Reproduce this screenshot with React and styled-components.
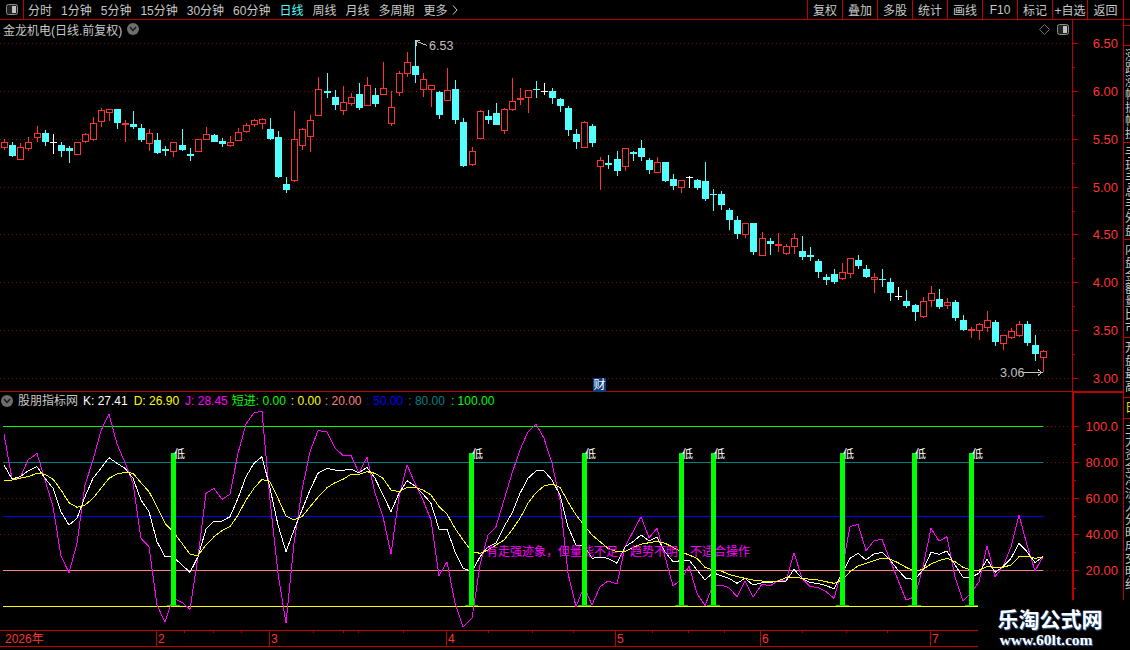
import React from "react";
import styled, { createGlobalStyle } from "styled-components";

const RED_LINE = "#c00000";
const RED_TEXT = "#ff3333";
const CYAN = "#54ffff";
const GRID = "#7c1010";
const FONT = `"Liberation Sans", "Noto Sans CJK SC", sans-serif`;

const Global = createGlobalStyle`
  html, body { margin:0; padding:0; background:#000; }
  body { font-family:${FONT}; font-size:12px; color:#c8c8c8; }
`;

const Screen = styled.div`
  position:relative;
  width:1130px;
  height:650px;
  background:#000;
  overflow:hidden;
`;

/* toolbar */
const Toolbar = styled.div`
  display:flex;
  align-items:stretch;
  height:19px;
  border-bottom:1px solid ${RED_LINE};
`;
const ToggleBox = styled.div`
  width:23px;
  display:flex;
  align-items:center;
  justify-content:center;
  border-right:1px solid ${RED_LINE};
`;
const Nav = styled.div`
  display:flex;
  align-items:center;
  gap:9px;
  padding-left:4px;
`;
const NavItem = styled.span`
  display:flex;
  align-items:center;
  gap:4px;
  white-space:nowrap;
  color:${p => (p.$active ? CYAN : "#c8c8c8")};
`;
const Actions = styled.div`
  display:flex;
  margin-left:auto;
  margin-right:6px;
  border-right:1px solid ${RED_LINE};
`;
const Action = styled.span`
  width:${p => p.$w || 35}px;
  box-sizing:border-box;
  border-left:1px solid ${RED_LINE};
  display:flex;
  align-items:center;
  justify-content:center;
  white-space:nowrap;
`;

/* body */
const Body = styled.div`
  display:flex;
  height:630px;
`;
const Main = styled.div`
  width:1123px;
  display:flex;
  flex-direction:column;
`;
const Pane = styled.div`
  display:grid;
  grid-template-columns:1072px 51px;
  height:${p => p.$h}px;
  border-bottom:${p => (p.$ruled ? `1px solid ${RED_LINE}` : "none")};
`;
const Stack = styled.div`
  position:relative;
  display:flex;
  flex-direction:column;
  min-width:0;
`;
const TitleRow = styled.div`
  display:flex;
  align-items:center;
  height:18px;
  padding-left:3px;
  gap:5px;
  white-space:nowrap;
`;
const TitleTools = styled.div`
  display:flex;
  align-items:center;
  gap:7px;
  margin-left:auto;
  margin-right:3px;
`;
const Round = styled.span`
  width:12px;
  height:12px;
  border-radius:50%;
  background:#6e6e6e;
  display:flex;
  align-items:center;
  justify-content:center;
  flex:none;
`;
const Plot = styled.svg`
  display:block;
  flex:none;
`;
const Axis = styled.div`
  box-sizing:border-box;
  border-left:${p => p.$weight}px solid ${RED_LINE};
  border-top:${p => (p.$framed ? `1px solid ${RED_LINE}` : "none")};
  overflow:hidden;
`;
const CaiBadge = styled.span`
  position:absolute;
  left:593px;
  bottom:-1px;
  width:13px;
  height:14px;
  line-height:14px;
  text-align:center;
  background:#0b3f7f;
  color:#fff;
`;
const LegendRow = styled.div`
  display:flex;
  align-items:baseline;
  height:18px;
  line-height:18px;
  padding-left:1px;
  white-space:nowrap;
`;
const LegendBall = styled.span`
  align-self:center;
`;
const LegendName = styled.span`
  margin:0 5px 0 5px;
  width:60px;
`;
const LegendValue = styled.span`
  color:${p => p.$color};
  margin-right:${p => p.$gap ?? 6}px;
`;

/* clipped column on the far right */
const Strip = styled.div`
  flex:1;
  border-left:1px solid ${RED_LINE};
  display:flex;
  flex-direction:column;
  overflow:hidden;
`;
const StripCell = styled.div`
  height:${p => p.$h}px;
  flex:none;
  box-sizing:border-box;
  border-bottom:1px solid ${RED_LINE};
  padding:${p => (p.$pad ? "4px 0 0 1px" : "0")};
  width:18px;
  line-height:13px;
  word-break:break-all;
  overflow:hidden;
  color:${p => p.$color || "#c8c8c8"};
`;

const Watermark = styled.div`
  position:absolute;
  right:0;
  bottom:0;
  width:152px;
  height:50px;
  background:#000;
  display:flex;
  flex-direction:column;
  align-items:center;
  padding-right:8px;
  box-sizing:border-box;
`;
const MarkName = styled.div`
  font:700 21px/26px "Noto Sans CJK SC", sans-serif;
  color:#fff;
  margin-top:5px;
  text-shadow:1px 1px 1px #35689c;
`;
const MarkUrl = styled.div`
  font:700 15.5px/16px "Liberation Serif", serif;
  color:#fff;
  margin:1px 8px 0 0;
  text-shadow:1px 1px 1px #35689c;
`;

/* candles read off the chart: [type, wickTop, bodyTop, bodyBottom, wickBottom], 3x crop units */
const SEG_A = [
  ["r",298,307,324,330],["c",307,316,348,351],["r",309,322,360,360],["r",292,307,327,333],["r",259,280,293,305],
  ["c",270,280,306,318],["w",282,307,309,342],["c",307,316,333,351],["c",319,324,333,369],["r",307,307,345,345],
  ["r",280,283,306,309],["r",232,250,300,303],["r",205,211,246,261],["r",208,208,218,243],["c",207,207,249,267],
  ["r",240,250,256,306],["c",213,252,262,267],["c",252,264,300,306],["r",268,280,312,333],["c",279,300,339,342],
  ["c",319,327,333,348],["r",307,307,336,351],["c",267,315,330,333],["c",324,342,348,363],["r",298,298,336,336],
  ["r",261,283,300,300],["c",282,285,306,306],["c",294,303,312,321],["r",288,306,318,321],["r",264,276,303,303],
  ["r",250,256,276,279],["r",237,241,255,261],["r",234,237,252,267],["c",234,267,297,300],["c",273,291,411,414],
  ["c",411,432,450,459],["r",213,297,423,426],["r",264,267,318,330],["r",225,240,291,336],["r",111,148,228,228],
  ["c",99,153,159,174],["c",150,171,195,210],["r",138,186,213,225],["r",159,171,192,198],["c",129,162,204,210],
  ["r",111,135,198,198],["c",144,165,192,201],["r",66,145,165,165],["r",153,201,252,258],["r",93,99,159,168],
];
const SEG_B = [
  ["r",66,97,131,140],["c",30,108,135,159],["r",129,148,179,201],["r",165,166,179,231],["c",183,186,255,267],
  ["r",114,181,213,213],["c",150,177,270,282],["c",264,276,408,410],["r",351,364,405,408],["r",241,243,327,327],
  ["c",240,258,270,282],["c",219,249,285,285],["r",234,238,303,312],["r",144,214,240,243],["r",174,204,210,225],
  ["r",180,181,204,249],["c",153,177,180,204],["w",159,183,186,195],["c",174,183,204,222],["c",204,207,228,246],
  ["c",228,234,300,318],["c",297,312,336,357],["r",273,277,354,354],["c",282,288,339,351],["r",381,391,410,480],
  ["c",375,399,404,417],["c",363,387,423,438],["r",355,355,410,423],["c",363,366,372,393],["c",330,354,381,393],
  ["c",384,390,420,432],["r",381,397,429,429],["c",396,396,453,456],["c",432,447,468,480],["r",451,451,473,489],
  ["w",438,441,444,474],["c",447,450,474,480],["c",396,453,507,513],["c",477,492,495,543],["c",483,492,525,540],
  ["c",534,540,570,600],
];
const SEG_C = [
  ["c",78,90,132,147],["r",99,99,135,144],["c",99,99,186,195],["r",126,145,198,198],["c",144,153,162,195],
  ["r",129,162,168,186],["r",162,168,192,195],["r",129,145,171,192],["c",138,183,201,210],["c",171,195,201,213],
  ["c",207,213,246,264],["c",252,261,270,285],["c",237,252,276,282],["r",219,246,267,270],["r",204,204,252,264],
  ["c",195,210,228,237],["c",225,237,261,264],["r",249,261,270,309],["c",237,267,270,291],["c",264,276,309,333],
  ["w",291,318,321,330],["c",300,333,348,354],["c",342,345,366,393],["r",321,333,381,384],["r",288,309,333,351],
  ["c",297,327,351,357],["r",324,336,348,357],["c",330,336,384,393],["c",375,390,420,423],["r",411,417,423,444],
  ["r",400,402,423,450],["r",363,390,414,426],["c",390,396,456,468],["r",435,435,462,480],["r",414,423,444,447],
  ["r",393,402,438,441],["c",393,402,459,468],["c",435,465,492,513],["r",480,483,504,546],
];
const placeSeg = (seg, base) =>
  seg.map(([t, a, b, c, d]) => [t, ...[a, b, c, d].map(v => Math.round(base + v / 3))]);
const CANDLES = [...placeSeg(SEG_A, 40), ...placeSeg(SEG_B, 30), ...placeSeg(SEG_C, 190)];
const barX = i => Math.round(4.33 + 8.055 * i);

const SERIES_J = [72,207,204,150,130,210,290,438,488,400,225,150,62,12,102,158,220,385,410,585,637,565,577,598,440,250,235,268,253,130,42,8,4,270,490,640,400,240,125,62,65,115,136,136,190,142,250,320,432,260,165,220,270,330,497,455,580,650,625,465,375,350,270,190,120,65,43,85,160,270,490,590,530,585,530,513,522,410,365,320,383,355,440,528,510,468,550,587,525,525,533,560,513,562,522,528,512,513,428,505,530,532,545,565,480,350,343,422,392,388,450,510,570,560,470,355,393,380,500,572,550,515,407,500,470,410,315,405,483,440];
const SERIES_K = [165,207,200,183,170,205,235,305,345,325,260,205,175,143,160,175,205,270,305,395,440,440,465,487,440,358,333,333,320,265,200,160,140,235,345,425,360,300,240,190,175,180,181,178,188,172,205,255,305,250,212,228,252,280,357,358,425,475,485,440,410,400,350,310,250,205,183,182,210,255,350,405,405,445,442,445,460,410,395,375,392,382,425,455,452,450,480,510,488,497,505,520,505,525,518,518,513,513,478,505,518,520,527,536,490,445,430,450,432,427,450,480,506,508,480,427,433,423,465,502,502,490,448,487,470,445,400,425,458,440];
const SERIES_D = [211,210,205,200,190,193,208,240,278,292,285,265,235,205,192,187,190,218,245,290,340,365,400,433,437,405,380,362,350,315,270,235,208,215,265,318,330,320,290,262,233,218,208,193,193,185,190,205,240,245,232,232,240,255,290,312,355,390,425,430,420,405,390,360,325,280,248,228,222,232,275,315,345,375,395,415,425,425,412,403,398,394,400,412,425,435,445,472,480,483,493,500,505,510,513,516,513,503,502,505,508,510,515,520,510,485,468,460,452,444,447,458,472,484,478,462,452,445,455,472,480,480,470,472,472,465,440,438,445,442];
const toPoints = s => s.map((v, i) => `${barX(i)},${(410 + v / 3).toFixed(1)}`).join(" ");

const PRICE_GRID = [43, 91, 139, 187, 234, 282, 330, 378];
const PRICE_LABELS = ["6.50", "6.00", "5.50", "5.00", "4.50", "4.00", "3.50", "3.00"];
const LEVELS = [
  { y: 426, color: "#00ff00", label: "100.0" },
  { y: 462, color: "#008080", label: "80.00" },
  { y: 498, label: "60.00" },
  { y: 534, label: "40.00" },
  { y: 570, color: "#ff8080", label: "20.00" },
];
const SIGNAL_X = [171, 469, 582, 679, 711, 840, 912, 969];
const MONTHS = [[156, "2", 158], [269, "3", 271], [446, "4", 448], [615, "5", 617], [760, "6", 762], [930, "7", 932]];
const MINOR_TICKS = [184, 213, 241, 313, 343, 358, 403, 488, 532, 573, 652, 688, 724, 802, 846, 887];

const PanelIcon = () => (
  <svg width="12" height="11" viewBox="0 0 12 11">
    <rect x="0.5" y="0.5" width="11" height="10" rx="2" fill="#222" stroke="#8a8a8a" />
    <rect x="6" y="2" width="4" height="7" fill="#c0c0c0" />
  </svg>
);
const Diamond = () => (
  <svg width="11" height="11" viewBox="0 0 11 11">
    <path d="M5.5 .5 L10.5 5.5 L5.5 10.5 L.5 5.5 Z" fill="none" stroke="#707070" />
  </svg>
);
const ChevronBall = () => (
  <Round>
    <svg width="8" height="6" viewBox="0 0 8 6">
      <path d="M1 1 L4 4.5 L7 1" fill="none" stroke="#161616" strokeWidth="1.4" />
    </svg>
  </Round>
);

function Candle({ data, i }) {
  const [type, wickTop, bodyTop, bodyBottom, wickBottom] = data;
  const x = barX(i);
  const color = type === "c" ? CYAN : type === "w" ? "#ffffff" : "#ff3232";
  const h = Math.max(bodyBottom - bodyTop, 1);
  return (
    <g>
      <rect x={x} y={wickTop} width="1" height={wickBottom - wickTop} fill={color} />
      {type === "r" && h > 2 ? (
        <rect x={x - 2.5} y={bodyTop + 0.5} width="6" height={h - 1} fill="#000" stroke={color} />
      ) : (
        <rect x={x - 3} y={bodyTop} width="7" height={h} fill={color} />
      )}
    </g>
  );
}

function PriceChart() {
  return (
    <Plot width="1072" height="353" viewBox="0 38 1072 353" shapeRendering="crispEdges">
      {PRICE_GRID.map(y => (
        <line key={y} x1="0" x2="1072" y1={y + 0.5} y2={y + 0.5} stroke={GRID} strokeDasharray="1 3" />
      ))}
      {CANDLES.map((c, i) => <Candle key={i} data={c} i={i} />)}
      <path d="M420 40.5 H416.5 V46 M417 41.5 L427 45.5" fill="none" stroke="#c0c0c0" />
      <text x="429" y="50" fill="#c0c0c0" fontSize="12.5" shapeRendering="auto">6.53</text>
      <text x="1000" y="377" fill="#c0c0c0" fontSize="12.5" shapeRendering="auto">3.06</text>
      <path d="M1022 372.5 H1042 M1038 369.5 L1042 372.5 L1038 375.5" fill="none" stroke="#c0c0c0" />
    </Plot>
  );
}

function PriceAxis() {
  const minor = PRICE_GRID.slice(0, -1).map((y, i) => Math.round((y + PRICE_GRID[i + 1]) / 2));
  return (
    <Plot width="50" height="371" viewBox="1073 20 50 371">
      {PRICE_GRID.map((y, i) => (
        <g key={y}>
          <rect x="1073" y={y} width="5" height="1" fill={RED_LINE} />
          <text x="1118" y={y + 5} textAnchor="end" fill={RED_TEXT} fontSize="13">{PRICE_LABELS[i]}</text>
        </g>
      ))}
      {minor.map(y => <rect key={y} x="1073" y={y} width="2" height="1" fill={RED_LINE} />)}
    </Plot>
  );
}

function IndicatorChart() {
  return (
    <Plot width="1072" height="220" viewBox="0 410 1072 220" shapeRendering="crispEdges">
      {LEVELS.map(l => (
        <g key={l.y}>
          <line x1={l.color ? 1043 : 0} x2="1072" y1={l.y + 0.5} y2={l.y + 0.5} stroke={GRID} strokeDasharray="1 3" />
          {l.color && <line x1="3" x2="1043" y1={l.y + 0.5} y2={l.y + 0.5} stroke={l.color} />}
        </g>
      ))}
      <line x1="3" x2="1043" y1="516.5" y2="516.5" stroke="#0000ff" />
      <line x1="3" x2="1043" y1="606.5" y2="606.5" stroke="#ffff00" />
      <polyline points={toPoints(SERIES_J)} fill="none" stroke="#ff00ff" />
      <polyline points={toPoints(SERIES_K)} fill="none" stroke="#ffffff" />
      <polyline points={toPoints(SERIES_D)} fill="none" stroke="#ffff00" />
      <text x="486" y="556" fill="#ff00ff" fontSize="12" shapeRendering="auto">有走强迹象，但量能不足，趋势不明，不适合操作</text>
      {SIGNAL_X.map(x => (
        <g key={x}>
          <rect x={x} y="453" width="5" height="153" fill="#00ff00" />
          <rect x={x - 4} y="605" width="13" height="1" fill="#00c000" />
          <text x={x + 3} y="458" fill="#fff" fontSize="11" shapeRendering="auto">低</text>
        </g>
      ))}
    </Plot>
  );
}

function DateAxis() {
  return (
    <Plot width="1072" height="17" viewBox="0 630 1072 17">
      <rect x="0" y="630" width="1072" height="1" fill={RED_LINE} />
      <rect x="0" y="646" width="1072" height="1" fill={RED_LINE} />
      {MINOR_TICKS.map(x => <rect key={x} x={x} y="631" width="1" height="2" fill={RED_LINE} />)}
      {MONTHS.map(([x, label, tx]) => (
        <g key={label}>
          <rect x={x} y="631" width="1" height="15" fill={RED_LINE} />
          <text x={tx} y="643" fill={RED_TEXT} fontSize="12">{label}</text>
        </g>
      ))}
      <text x="5" y="643" fill={RED_TEXT} fontSize="12">2026年</text>
    </Plot>
  );
}

function IndicatorAxis() {
  const minor = [444, 480, 516, 552, 588];
  return (
    <Plot width="49" height="257" viewBox="1074 393 49 257">
      {LEVELS.map(l => (
        <g key={l.y}>
          <rect x="1074" y={l.y} width="5" height="1" fill={RED_LINE} />
          <text x="1118" y={l.y + 5} textAnchor="end" fill={RED_TEXT} fontSize="13">{l.label}</text>
        </g>
      ))}
      {minor.map(y => <rect key={y} x="1074" y={y} width="2" height="1" fill={RED_LINE} />)}
    </Plot>
  );
}

const NAV = ["分时", "1分钟", "5分钟", "15分钟", "30分钟", "60分钟", "日线", "周线", "月线", "多周期"];
const ACTIONS = ["复权", "叠加", "多股", "统计", "画线", "F10", "标记", "+自选", "返回"];

export default function App() {
  return (
    <Screen>
      <Global />
      <Toolbar>
        <ToggleBox><PanelIcon /></ToggleBox>
        <Nav>
          {NAV.map(n => <NavItem key={n} $active={n === "日线"}>{n}</NavItem>)}
          <NavItem>
            更多
            <svg width="6" height="10" viewBox="0 0 6 10">
              <path d="M1 .5 L5 5 L1 9.5" fill="none" stroke="#c8c8c8" />
            </svg>
          </NavItem>
        </Nav>
        <Actions>
          {ACTIONS.map((a, i) => <Action key={a} $w={i === ACTIONS.length - 1 ? 36 : 35}>{a}</Action>)}
        </Actions>
      </Toolbar>

      <Body>
        <Main>
          <Pane $h={372} $ruled>
            <Stack>
              <TitleRow>
                金龙机电(日线.前复权)
                <ChevronBall />
                <TitleTools><Diamond /><PanelIcon /></TitleTools>
              </TitleRow>
              <PriceChart />
              <CaiBadge>财</CaiBadge>
            </Stack>
            <Axis $weight={1}><PriceAxis /></Axis>
          </Pane>
          <Pane $h={258}>
            <Stack>
              <LegendRow>
                <LegendBall><ChevronBall /></LegendBall>
                <LegendName>股朋指标网</LegendName>
                <LegendValue $color="#ffffff">K: 27.41</LegendValue>
                <LegendValue $color="#ffff00">D: 26.90</LegendValue>
                <LegendValue $color="#ff00ff" $gap={4}>J: 28.45</LegendValue>
                <LegendValue $color="#00ff00" $gap={5}>短进: 0.00</LegendValue>
                <LegendValue $color="#ffff00" $gap={4}>: 0.00</LegendValue>
                <LegendValue $color="#ff8080" $gap={5}>: 20.00</LegendValue>
                <LegendValue $color="#0000ff" $gap={5}>: 50.00</LegendValue>
                <LegendValue $color="#008080" $gap={6}>: 80.00</LegendValue>
                <LegendValue $color="#00ff00">: 100.00</LegendValue>
              </LegendRow>
              <IndicatorChart />
              <DateAxis />
            </Stack>
            <Axis $weight={2} $framed><IndicatorAxis /></Axis>
          </Pane>
        </Main>
        <Strip>
          <StripCell $h={6} />
          <StripCell $h={20} />
          <StripCell $h={97} $pad>涨跌涨幅振幅换</StripCell>
          <StripCell $h={97} $pad>手现手总手外盘</StripCell>
          <StripCell $h={98} $pad>内盘金额量比市</StripCell>
          <StripCell $h={60} $pad>开盘最高</StripCell>
          <StripCell $h={21} $pad $color="#e6e600">日</StripCell>
          <StripCell $h={182} $pad>主力资金净流入分时成交明细</StripCell>
        </Strip>
      </Body>

      <Watermark>
        <MarkName>乐淘公式网</MarkName>
        <MarkUrl>www.60lt.com</MarkUrl>
      </Watermark>
    </Screen>
  );
}
